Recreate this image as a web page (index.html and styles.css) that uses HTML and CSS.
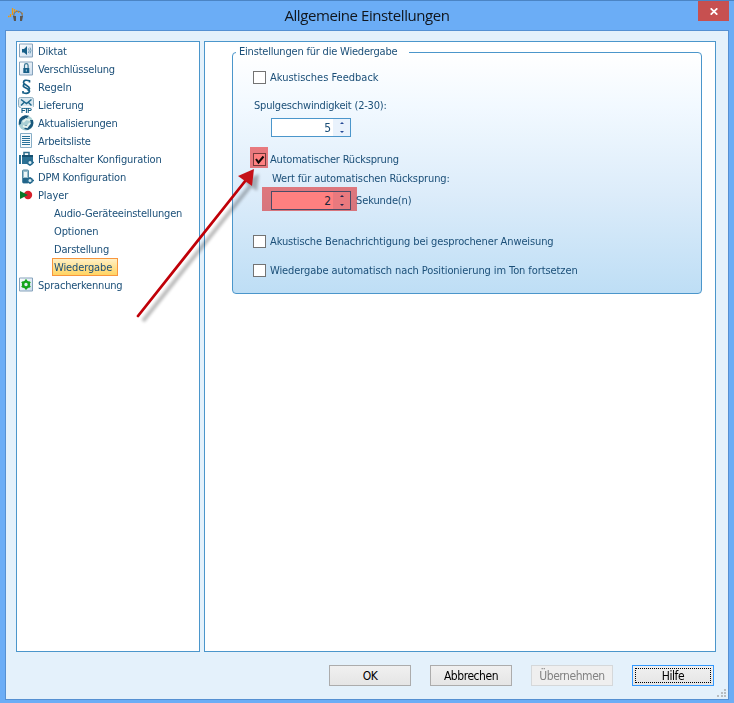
FILE: index.html
```html
<!DOCTYPE html>
<html lang="de">
<head>
<meta charset="utf-8">
<title>Allgemeine Einstellungen</title>
<link rel="stylesheet" href="styles.css">
</head>
<body>
<div class="window">
  <header class="titlebar">
    <svg class="app-icon" width="16" height="16" viewBox="0 0 16 16"><path d="M0 9.500h1.500M2.500 7v3M4.500 1v7M6.500 2v4M8.500 3v2M10.500 4v2M13 6.500h2" stroke="#f29a0b" stroke-width="1.300" fill="none"/><path d="M5.800 10V8.500a4.200 4.200 0 0 1 8.500 0V10" fill="none" stroke="#777" stroke-width="1.200"/><path d="M5 9h3v5H6zM15 9h-3v5h2z" fill="#5b5752"/></svg>
    <h1>Allgemeine Einstellungen</h1>
    <button class="close" aria-label="Schließen"><svg width="8" height="7" viewBox="0 0 8 7"><path d="M.7.3l6.600 6.400M7.300.3L.7 6.700" stroke="#fff" stroke-width="1.700"/></svg></button>
  </header>
  <main class="client">
    <div class="panels">
      <nav class="tree">
        <div class="row"><svg width="16" height="16" viewBox="0 0 16 16"><use href="#frame"/><path d="M3 6h2l3-3v9L5 9.500H3z" fill="#175f87"/><path d="M9.500 5.500q1.500 2 0 4.500M11 4.500q2 3 0 6" fill="none" stroke="#6c9cb9"/></svg><span class="t-2">Diktat</span></div>
        <div class="row"><svg width="16" height="16" viewBox="0 0 16 16"><use href="#frame"/><path d="M5.500 7V4.500a1.800 1.800 0 0 1 3.600 0V7" fill="none" stroke="#397795" stroke-width="1.200"/><path d="M4.300 7h6v5h-6z" fill="#175f87"/><path d="M7.300 8.500v2" stroke="#b8d8e5"/></svg><span class="t-2">Verschlüsselung</span></div>
        <div class="row"><svg width="16" height="16" viewBox="0 0 16 16"><path d="M10.500 3.500V1.800Q4.500.2 4.500 3.500C4.500 6 10.500 6.500 10.500 9.500Q10 11.300 8.500 11M5.500 5Q4 6 4.500 7.500C5.500 9 10.500 9.500 10.500 12.300Q9.500 15.500 4 13.800V12" fill="none" stroke="#175f87" stroke-width="1.700"/></svg><span>Regeln</span></div>
        <div class="row"><svg width="16" height="16" viewBox="0 0 16 16" overflow="visible"><rect x="-.5" y=".5" width="15" height="10" rx="2" fill="#d9e7ef" stroke="#8faebf"/><path d="M2 2.500l5.500 4 5-4M2 8.500l3-3M12.500 8.500l-3-3" fill="none" stroke="#1b668c" stroke-width="1.400"/><path d="M2 9h12v7H2z" fill="#fff" opacity=".8"/><text class="ftp" x="2" y="15.500" textLength="11">FTP</text></svg><span class="t-1">Lieferung</span></div>
        <div class="row"><svg width="16" height="16" viewBox="0 0 16 16" overflow="visible"><circle cx="7" cy="8" r="7.500" fill="#a9d0d4"/><path d="M-.2 10Q-1 2 6 .3l4 .5-2 2 2 2-5-.5Q2 5 2 9z" fill="#19577b"/><path d="M14 5q2 7-5 10l-4-1 2-2-2-2 5 .500Q13 9 11 5z" fill="#19577b"/><path d="M4 7l3-3 4 1M11 8l-3 4-4-1" fill="none" stroke="#e5f3ed" stroke-width="2"/></svg><span class="t-3">Aktualisierungen</span></div>
        <div class="row"><svg width="16" height="16" viewBox="0 0 16 16"><path d="M1.500.5h11v14h-11z" fill="#f6fafc" stroke="#87aec7"/><path d="M3 3.500h8M3 5.500h8M3 7.500h8M3 9.500h8M3 11.500h8" stroke="#27719a"/></svg><span class="t-3">Arbeitsliste</span></div>
        <div class="row"><svg width="16" height="16" viewBox="0 0 16 16"><path d="M5 4V1.500h5V4" fill="none" stroke="#2c6c8b" stroke-width="1.500"/><path d="M0 4h2v9H0zM3 4h11v9H3z" fill="#2b7194"/><path d="M3 4h11v2H3z" fill="#154f70"/><use href="#gear"/></svg><span class="t-1">Fußschalter Konfiguration</span></div>
        <div class="row"><svg width="16" height="16" viewBox="0 0 16 16"><rect x="3.500" y="1" width="6" height="13" rx="1" fill="#98bdcc" stroke="#5088a3"/><path d="M5 3h3v5H5z" fill="#edf6f8"/><path d="M4 9h5v5H4z" fill="#226489"/><use href="#gear"/></svg><span class="t-2">DPM Konfiguration</span></div>
        <div class="row"><svg width="16" height="16" viewBox="0 0 16 16"><circle cx="9" cy="8" r="4.200" fill="#d5212b"/><path d="M1 4l8 4-8 4z" fill="#087829"/></svg><span class="t-1">Player</span></div>
        <div class="row sub"><span class="t-2">Audio-Geräteeinstellungen</span></div>
        <div class="row sub"><span class="t-1">Optionen</span></div>
        <div class="row sub"><span class="t-2">Darstellung</span></div>
        <div class="row sub selected"><span class="t-1">Wiedergabe</span></div>
        <div class="row"><svg width="16" height="16" viewBox="0 0 16 16"><use href="#frame"/><circle cx="7" cy="7.500" r="2.900" fill="none" stroke="#16a51b" stroke-width="2.400"/><path d="M7 2.500v2.500M7 10v2.500M2.700 5l2 1.200M9.300 8.800l2 1.200M2.700 10l2-1.200M9.300 6.200l2-1.200" stroke="#16a51b" stroke-width="2"/></svg><span class="t-2">Spracherkennung</span></div>
      </nav>
      <section class="content">
        <div class="group">
          <div class="legend"><span class="t-2">Einstellungen für die Wiedergabe</span></div>
          <label class="check feedback"><i class="box"></i><span>Akustisches Feedback</span></label>
          <div class="caption speed"><span class="t-2">Spulgeschwindigkeit (2-30):</span></div>
          <div class="value first"><div class="spin"><b>5</b><span class="arrows"><i></i><i></i></span></div></div>
          <label class="check auto"><i class="box marked"><svg width="11" height="11" viewBox="0 0 11 11"><path d="M2 5l2.500 3.500L9.500 2.500" fill="none" stroke="#111" stroke-width="2"/></svg></i><span class="t-2">Automatischer Rücksprung</span></label>
          <div class="caption jump"><span class="t-1">Wert für automatischen Rücksprung:</span></div>
          <div class="value second"><div class="spin marked"><b>2</b><span class="arrows"><i></i><i></i></span></div><span class="unit t-1">Sekunde(n)</span></div>
          <label class="check notice"><i class="box"></i><span class="t-1">Akustische Benachrichtigung bei gesprochener Anweisung</span></label>
          <label class="check resume"><i class="box"></i><span class="t-09">Wiedergabe automatisch nach Positionierung im Ton fortsetzen</span></label>
        </div>
      </section>
    </div>
    <footer class="buttons">
      <button>OK</button><button>Abbrechen</button><button disabled>Übernehmen</button><button class="focus">Hilfe</button>
    </footer>
    <svg class="grip" width="9" height="9" viewBox="0 0 9 9"><path d="M7 0h2v2H7zM4 3h2v2H4zM7 3h2v2H7zM0 6h2v2H0zM4 6h2v2H4zM7 6h2v2H7z" fill="#b7bdc1"/></svg>
  </main>
</div>
<svg class="pointer" width="734" height="703" viewBox="0 0 734 703">
  <defs>
    <filter id="soft"><feGaussianBlur stdDeviation="1.500"/></filter>
    <linearGradient id="tile" x2="1" y2="1"><stop stop-color="#fff"/><stop offset="1" stop-color="#cadced"/></linearGradient>
    <g id="frame"><path d="M.5 1.500h13v13H.5z" fill="url(#tile)" stroke="#86a3bc" transform="translate(0 -.5)"/></g>
    <g id="gear"><circle cx="11" cy="11.500" r="2.300" fill="#d8ecf4" stroke="#286b8f" stroke-width="1.500"/><path d="M11 8v2M11 13v2M7 11.500h2M13 11.500h2" stroke="#286b8f" stroke-width="1.300"/></g>
  </defs>
  <g filter="url(#soft)" opacity=".27" transform="translate(5 5)"><path d="M138 316L246 180" stroke="#000" stroke-width="4"/><path d="M254 169l-16 7 14 10z"/></g>
  <path d="M138 316L246 180" stroke="#c00008" stroke-width="2.800" stroke-linecap="round"/><path d="M254 169l-16 7 14 10z" fill="#c51118"/>
</svg>
</body>
</html>
```
FILE: styles.css
```css
* { box-sizing: border-box; }
body { margin: 0; font: 11px/18px "DejaVu Sans Condensed", "DejaVu Sans", sans-serif; color: #1b4f78; }
.window { width: 734px; height: 703px; background: #6badf6; border-top: 1px solid #4b84c4; padding: 0 5px 3px; display: flex; flex-direction: column; }
.titlebar { height: 29px; flex: none; display: grid; grid-template-columns: 100px 1fr 100px; padding-left: 3px; align-items: start; }
.app-icon { margin-top: 6px; }
h1 { margin: 3px 3px 0 0; font: 15px/22px "Open Sans", sans-serif; color: #10151c; text-align: center; letter-spacing: -.42px; white-space: nowrap; }
.close { justify-self: end; width: 31px; height: 20px; border: 0; padding: 0; background: #c75050; display: flex; align-items: center; justify-content: center; }
.client { flex: 1; border: 1px solid #5590d2; background: #e4f1fb; padding: 10px 12px 0 10px; position: relative; display: flex; flex-direction: column; }
.panels { height: 611px; display: grid; grid-template-columns: 184px 512px; gap: 4px; }
.tree, .content { border: 1px solid #4b96cb; background: #fff; }
.row { display: flex; align-items: center; height: 18px; padding-left: 2px; gap: 3px; }
.row svg { flex: none; }
.row span { white-space: nowrap; line-height: 16px; padding-top: 2px; }
.sub { padding-left: 35px; }
.sub span { border: 1px solid transparent; line-height: 16px; padding: 1px 1px 0; }
.selected span { width: 66px; height: 18px; border-color: #f9963d; background: linear-gradient(#fff0c4, #ffd463); }
.t-09 { letter-spacing: -.09px; }
.t-1 { letter-spacing: -.12px; }
.t-2 { letter-spacing: -.2px; }
.t-3 { letter-spacing: -.25px; }
.ftp { font: bold 7px "Liberation Sans", sans-serif; fill: #0d5a82; }
.content { padding: 10px 13px 0 27px; }
.group { position: relative; height: 242px; border: 1px solid #4b96cb; border-radius: 4px; background: linear-gradient(#fff, #f2f9ff 22%, #dcecfa 59%, #bedef5); white-space: nowrap; }
.legend { position: absolute; left: 3px; top: -10px; width: 173px; height: 18px; padding-left: 3px; background: linear-gradient(transparent 9px, #fff 9px, #fff 10px, transparent 10px); }
.check { display: flex; align-items: center; gap: 4px; margin-left: 20px; height: 13px; }
.check span { line-height: 13px; }
.box { width: 13px; height: 13px; flex: none; border: 1px solid #737373; background: #fff; }
.feedback { margin-top: 18px; }
.caption { height: 14px; line-height: 14px; }
.speed { margin: 14px 0 0 21px; padding-top: 1px; }
.value { display: flex; margin-left: 38px; height: 19px; line-height: 19px; }
.first { margin-top: 6px; }
.spin { width: 80px; height: 19px; border: 1px solid #4b96cb; background: #fff; display: flex; justify-content: flex-end; }
.spin b { font-weight: 400; font-size: 12px; line-height: 18px; }
.arrows { width: 17px; margin-left: 2px; background: #e9f2fc; display: grid; grid-template-rows: 1fr 1fr; justify-items: center; align-items: center; }
.arrows i { border: 2px solid transparent; border-top: 0; border-bottom: 2px solid #254995; }
.arrows i + i { border-bottom: 0; border-top: 2px solid #254995; }
.auto { margin-top: 16px; }
.marked { position: relative; }
.marked::after { content: ""; position: absolute; mix-blend-mode: multiply; background: #ff8080; }
.box.marked { display: flex; }
.box.marked::after { left: -4px; top: -7px; width: 18px; height: 21px; }
.spin.marked::after { left: -10px; top: -5px; width: 95px; height: 24px; }
.jump { margin: 5px 0 0 39px; padding-top: 1px; }
.second { margin-top: 6px; }
.unit { margin-left: 5px; }
.notice { margin-top: 25px; }
.resume { margin-top: 16px; }
.buttons { display: flex; justify-content: flex-end; gap: 19px; margin: 13px 2px 0 0; }
.buttons button { width: 82px; height: 21px; border: 1px solid #acacac; background: linear-gradient(#f0f0f0, #e5e5e5); padding: 0; font: 12px/18px "DejaVu Sans Condensed", "DejaVu Sans", sans-serif; color: #000; letter-spacing: -.45px; position: relative; }
.buttons button:disabled { color: #838383; border-color: #d5d8da; background: #efefef; }
.buttons .focus { border-color: #3399ff; }
.focus::after { content: ""; position: absolute; inset: 2px; border: 1px dotted #000; }
.grip { position: absolute; right: 2px; bottom: 1px; }
.pointer { position: absolute; left: 0; top: 0; pointer-events: none; }
```
